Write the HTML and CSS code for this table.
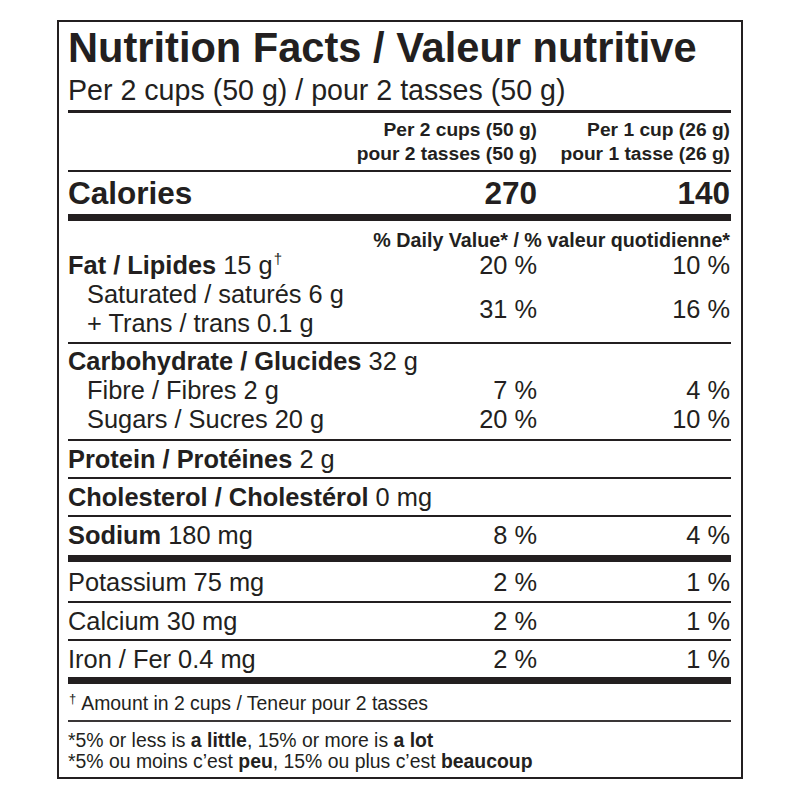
FILE: index.html
```html
<!DOCTYPE html>
<html lang="en">
<head>
<meta charset="utf-8">
<title>Nutrition Facts / Valeur nutritive</title>
<link rel="stylesheet" href="styles.css">
</head>
<body>
<div class="label">
  <h1 class="title">Nutrition Facts / Valeur nutritive</h1>
  <p class="serving">Per 2 cups (50 g) / pour 2 tasses (50 g)</p>
  <div class="rule rule-md"></div>

  <div class="grid head">
    <span></span>
    <div class="num">Per 2 cups (50 g)<br>pour 2 tasses (50 g)</div>
    <div class="num">Per 1 cup (26 g)<br>pour 1 tasse (26 g)</div>
  </div>
  <div class="rule"></div>

  <div class="grid calories">
    <span>Calories</span>
    <span class="num">270</span>
    <span class="num">140</span>
  </div>
  <div class="rule rule-thick"></div>

  <div class="dv">% Daily Value* / % valeur quotidienne*</div>

  <div class="block block-fat">
    <div class="grid line">
      <span class="name"><b>Fat / Lipides</b> 15 g<sup class="dagger">†</sup></span>
      <span class="num">20 %</span>
      <span class="num">10 %</span>
    </div>
    <div class="grid">
      <div class="name sub">
        <div class="line">Saturated / saturés 6 g</div>
        <div class="line">+ Trans / trans 0.1 g</div>
      </div>
      <span class="num mid">31 %</span>
      <span class="num mid">16 %</span>
    </div>
  </div>
  <div class="rule"></div>

  <div class="block block-carb">
    <div class="grid line">
      <span class="name"><b>Carbohydrate / Glucides</b> 32 g</span>
      <span></span>
      <span></span>
    </div>
    <div class="grid line">
      <span class="name sub">Fibre / Fibres 2 g</span>
      <span class="num">7 %</span>
      <span class="num">4 %</span>
    </div>
    <div class="grid line">
      <span class="name sub">Sugars / Sucres 20 g</span>
      <span class="num">20 %</span>
      <span class="num">10 %</span>
    </div>
  </div>
  <div class="rule"></div>

  <div class="grid line row">
    <span class="name"><b>Protein / Protéines</b> 2 g</span>
    <span></span>
    <span></span>
  </div>
  <div class="rule"></div>

  <div class="grid line row">
    <span class="name"><b>Cholesterol / Cholestérol</b> 0 mg</span>
    <span></span>
    <span></span>
  </div>
  <div class="rule"></div>

  <div class="grid line row row-sodium">
    <span class="name"><b>Sodium</b> 180 mg</span>
    <span class="num">8 %</span>
    <span class="num">4 %</span>
  </div>
  <div class="rule rule-thick"></div>

  <div class="grid line row row-first">
    <span class="name">Potassium 75 mg</span>
    <span class="num">2 %</span>
    <span class="num">1 %</span>
  </div>
  <div class="rule"></div>

  <div class="grid line row">
    <span class="name">Calcium 30 mg</span>
    <span class="num">2 %</span>
    <span class="num">1 %</span>
  </div>
  <div class="rule"></div>

  <div class="grid line row">
    <span class="name">Iron / Fer 0.4 mg</span>
    <span class="num">2 %</span>
    <span class="num">1 %</span>
  </div>
  <div class="rule rule-thick"></div>

  <p class="note"><sup class="note-dagger">†</sup>Amount in 2 cups / Teneur pour 2 tasses</p>
  <div class="rule rule-thin"></div>

  <div class="foot">
    <p>*5% or less is <b>a little</b>, 15% or more is <b>a lot</b></p>
    <p>*5% ou moins c’est <b>peu</b>, 15% ou plus c’est <b>beaucoup</b></p>
  </div>
</div>
</body>
</html>
```

FILE: styles.css
```css
* {
  box-sizing: border-box;
}

body {
  margin: 0;
  background: #ffffff;
  color: #231f20;
  font-family: "Liberation Sans", Arial, Helvetica, sans-serif;
}

.label {
  margin: 20px 0 0 57px;
  width: 686px;
  border: 2px solid #231f20;
  padding: 0 10px 0 9px;
}

.title {
  margin: 4px 0 0;
  font-size: 41.6px;
  line-height: 44px;
  font-weight: 700;
  white-space: nowrap;
}

.serving {
  margin: 4px 0;
  font-size: 28.6px;
  line-height: 32px;
  white-space: nowrap;
}

.rule {
  height: 2px;
  background: #231f20;
}

.rule-md {
  height: 3px;
}

.rule-thick {
  height: 7px;
}

.rule-thin {
  height: 1.5px;
  background: #3a3637;
}

.grid {
  display: grid;
  grid-template-columns: minmax(0, 1fr) 200px 193px;
}

.name {
  white-space: nowrap;
  min-width: 0;
}

.num {
  text-align: right;
  padding-right: 1px;
  white-space: nowrap;
}

.mid {
  align-self: center;
}

.head {
  padding: 5px 0 4px;
  font-size: 19.2px;
  font-weight: 700;
  line-height: 24px;
}

.calories {
  padding-top: 3px;
  margin-bottom: 3px;
  font-size: 31.5px;
  font-weight: 700;
  line-height: 36px;
}

.dv {
  margin-top: 8px;
  text-align: right;
  padding-right: 1px;
  font-size: 19.7px;
  font-weight: 700;
  line-height: 22px;
  white-space: nowrap;
}

.block,
.row {
  font-size: 25.4px;
  line-height: 29px;
}

.block-fat {
  padding-bottom: 4px;
}

.block-carb {
  padding: 3px 0 5px;
}

.sub {
  padding-left: 19px;
}

.row {
  padding: 3.5px 0;
}

.row-sodium {
  padding-bottom: 5.5px;
}

.row-first {
  padding: 6px 0 4px;
}

.dagger {
  font-size: 15px;
  line-height: 0;
  vertical-align: 10px;
  margin-left: 1px;
}

.note {
  margin: 0;
  padding: 8px 0 6px;
  font-size: 19.4px;
  line-height: 22px;
  white-space: nowrap;
}

.note-dagger {
  font-size: 13px;
  line-height: 0;
  vertical-align: 7px;
  margin: 0 5px 0 1px;
}

.foot {
  padding: 8.5px 0 4.5px;
  font-size: 19.4px;
  line-height: 21px;
  white-space: nowrap;
}

.foot p {
  margin: 0;
}
```
